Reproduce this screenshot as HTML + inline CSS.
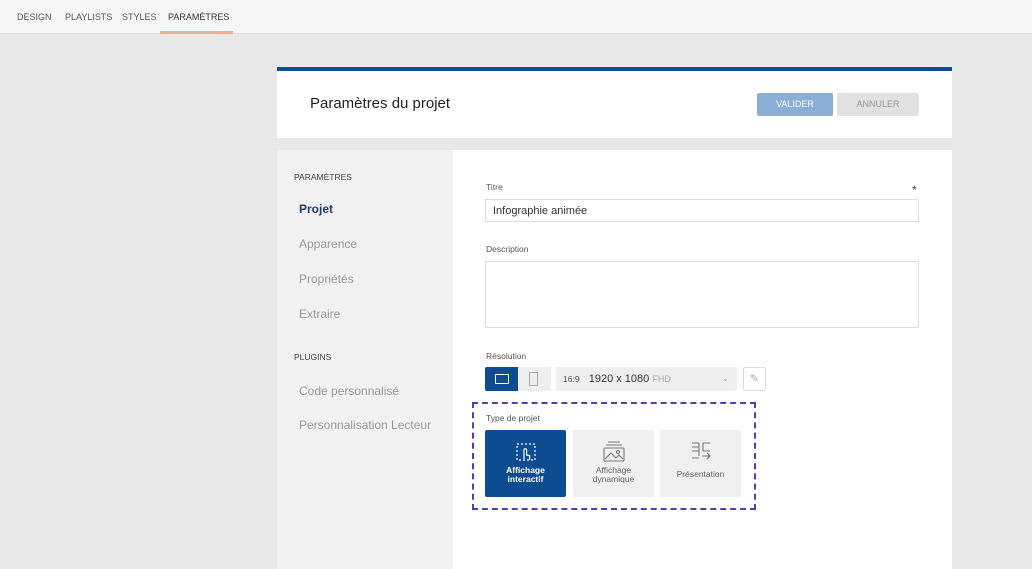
<!DOCTYPE html>
<html><head><meta charset="utf-8"><style>
*{box-sizing:border-box;margin:0;padding:0}
body{width:1032px;height:569px;overflow:hidden;background:#e9e9e9;font-family:"Liberation Sans",sans-serif;position:relative;color:#333}
.top{position:absolute;left:0;top:0;width:1032px;height:34px;background:#f6f6f6;border-bottom:1px solid #ddd}
.top span{position:absolute;top:12px;font-size:9px;color:#555}
.abs{position:absolute}
.lbl{position:absolute;font-size:8.5px;color:#555}
.side{position:absolute;font-size:12px;color:#999}
.inp{position:absolute;background:#fff;border:1px solid #ddd}
.card{position:absolute;top:430px;width:81px;height:67px;border-radius:2px;background:#f0f0f0;font-size:8.5px;color:#666;text-align:center;line-height:9px}
</style></head><body>
<div class="top">
<span style="left:17px">DESIGN</span><span style="left:65px">PLAYLISTS</span><span style="left:122px">STYLES</span><span style="left:168px;color:#333">PARAMÈTRES</span>
<div class="abs" style="left:160px;top:31px;width:73px;height:3px;background:#f0b088"></div>
</div>
<div class="abs" style="left:277px;top:67px;width:675px;height:4px;background:#0d4c91"></div>
<div class="abs" style="left:277px;top:71px;width:675px;height:67px;background:#fff"></div>
<div class="abs" style="left:310px;top:95px;font-size:15px;color:#222">Paramètres du projet</div>
<div class="abs" style="left:757px;top:93px;width:76px;height:23px;background:#8aaed6;color:#fff;font-size:9px;text-align:center;line-height:23px;border-radius:2px">VALIDER</div>
<div class="abs" style="left:837px;top:93px;width:82px;height:23px;background:#e2e2e2;color:#999;font-size:9px;text-align:center;line-height:23px;border-radius:2px">ANNULER</div>
<div class="abs" style="left:277px;top:150px;width:176px;height:419px;background:#f2f2f2"></div>
<div class="abs" style="left:453px;top:150px;width:499px;height:419px;background:#fff"></div>
<div class="lbl" style="left:294px;top:172px;color:#444">PARAMÈTRES</div>
<div class="side" style="left:299px;top:202px;color:#1f3e66;font-weight:bold">Projet</div>
<div class="side" style="left:299px;top:237px">Apparence</div>
<div class="side" style="left:299px;top:272px">Propriétés</div>
<div class="side" style="left:299px;top:307px">Extraire</div>
<div class="lbl" style="left:294px;top:352px;color:#444">PLUGINS</div>
<div class="side" style="left:299px;top:384px">Code personnalisé</div>
<div class="side" style="left:299px;top:418px">Personnalisation Lecteur</div>
<div class="lbl" style="left:486px;top:182px">Titre</div>
<div class="abs" style="left:912px;top:183px;font-size:12px">*</div>
<div class="inp" style="left:485px;top:199px;width:434px;height:23px;font-size:11px;color:#333;padding:5px 7px">Infographie animée</div>
<div class="lbl" style="left:486px;top:244px">Description</div>
<div class="inp" style="left:485px;top:261px;width:434px;height:67px"></div>
<div class="lbl" style="left:486px;top:351px">Résolution</div>
<div class="abs" style="left:485px;top:367px;width:33px;height:24px;background:#0d4c91;border-radius:2px 0 0 2px"><div class="abs" style="left:10px;top:7px;width:14px;height:10px;border:1.3px solid #fff;border-radius:1px"></div></div>
<div class="abs" style="left:518px;top:367px;width:33px;height:24px;background:#efefef"><div class="abs" style="left:11px;top:5px;width:9px;height:14px;border:1px solid #aaa"></div></div>
<div class="abs" style="left:556px;top:367px;width:181px;height:24px;background:#efefef;border-radius:2px;font-size:11px;color:#333;line-height:24px;padding-left:7px"><span style="font-size:8.5px;color:#555">16:9</span>&nbsp;&nbsp;&nbsp;1920 x 1080 <span style="font-size:9px;color:#aaa">FHD</span><span style="position:absolute;right:8px;color:#aaa;font-size:8px">⌄</span></div>
<div class="abs" style="left:743px;top:367px;width:23px;height:24px;background:#fff;border:1px solid #ddd;border-radius:2px;color:#aaa;font-size:11px;text-align:center;line-height:22px">✎</div>
<div class="abs" style="left:472px;top:402px;width:284px;height:108px;border:2.5px dashed #5b3cae"></div>
<div class="lbl" style="left:486px;top:413px">Type de projet</div>
<div class="card" style="left:485px;background:#0d4c91;color:#fff;font-weight:bold">
<svg width="22" height="22" style="margin-top:12px" viewBox="0 0 22 22" fill="none" stroke="#fff" stroke-width="1.2"><rect x="2" y="2" width="18" height="16" stroke-dasharray="2 2"/><path d="M9 17V8a1.3 1.3 0 0 1 2.6 0v5l3 .7v4"/></svg><br>Affichage<br>interactif</div>
<div class="card" style="left:573px">
<svg width="24" height="24" style="margin-top:10px" viewBox="0 0 24 24" fill="none" stroke="#777" stroke-width="1.1"><path d="M6 2h12M4 5h16"/><rect x="2" y="8" width="20" height="13" rx="1"/><path d="M3 19l6-6 5 5 3-3 4 4"/><circle cx="16" cy="12" r="1.5"/></svg><br>Affichage<br>dynamique</div>
<div class="card" style="left:660px;line-height:11px">
<svg width="22" height="22" style="margin-top:10px" viewBox="0 0 22 22" fill="none" stroke="#777" stroke-width="1.1"><path d="M2 3h7M2 7h7M2 11h7M9 3v13M13 3h7M13 11h7M13 3v8M12 16h8M17 13l3 3-3 3M2 18h7"/></svg><br><span style="position:relative;top:4px">Présentation</span></div>
</body></html>
